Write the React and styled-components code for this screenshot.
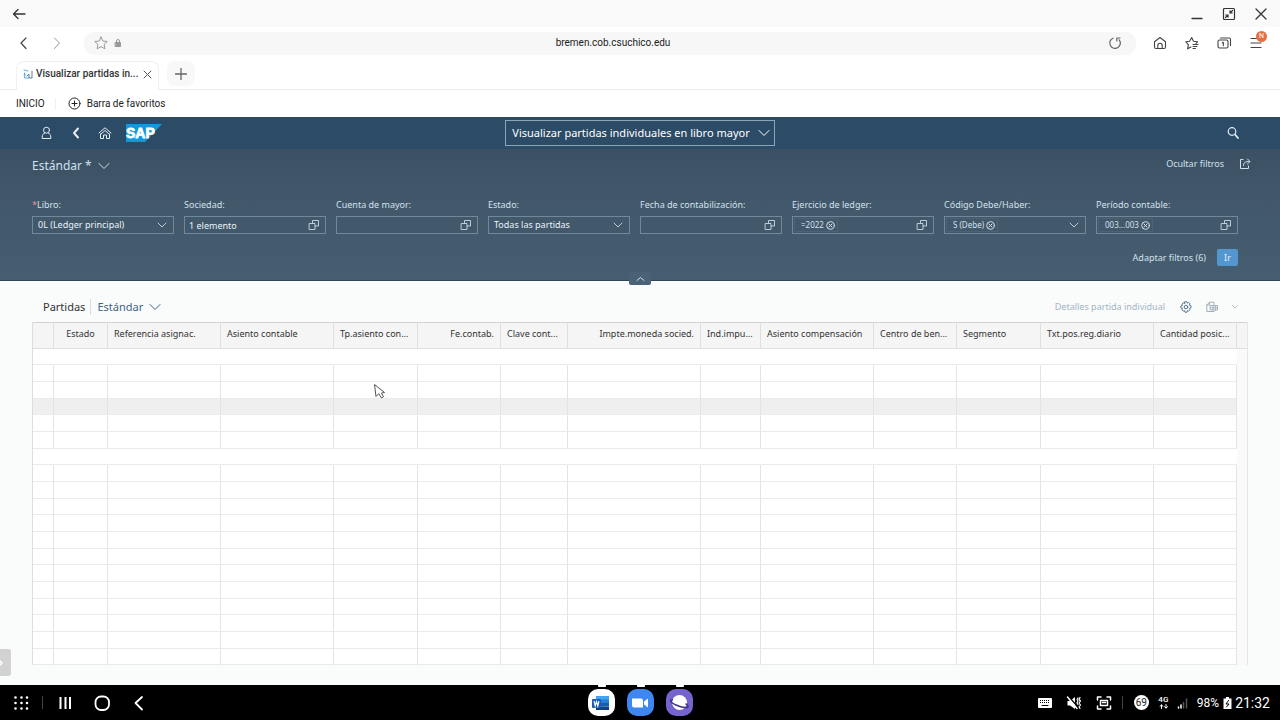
import React from "react";
import styled, { createGlobalStyle, css } from "styled-components";

const Global = createGlobalStyle`
  *, *::before, *::after { box-sizing: border-box; }
  body { margin: 0; background: #fafbfb; }
  button, input, select { font: inherit; color: inherit; margin: 0; padding: 0; border: 0; background: none; border-radius: 0; }
  a { color: inherit; text-decoration: none; }
`;

const Page = styled.div`
  min-height: 100vh;
  display: flex;
  flex-direction: column;
  font-family: Roboto, "Liberation Sans", sans-serif;
  font-size: 10px;
  line-height: 14px;
  color: #333;
`;

const Svg = styled.svg`
  display: block;
  flex: none;
  fill: none;
  stroke: currentColor;
  stroke-width: ${(p) => p.$w || 1};
  stroke-linecap: round;
  stroke-linejoin: round;
`;

const Icon = ({ w = 16, h = 16, sw, children }) => (
  <Svg width={w} height={h} viewBox={`0 0 ${w} ${h}`} $w={sw} aria-hidden="true">
    {children}
  </Svg>
);

const IconButton = styled.button`
  display: flex;
  align-items: center;
  justify-content: center;
  width: ${(p) => p.$w || 16}px;
  height: 16px;
  flex: none;
  color: ${(p) => p.$c || "inherit"};
`;

/* ---------- browser ---------- */

const TitleBar = styled.div`
  height: 27px;
  padding: 0 11px;
  display: flex;
  align-items: center;
  justify-content: space-between;
  background: #fafafa;
  color: #333;
`;
const Group = styled.div`
  display: flex;
  align-items: center;
  gap: ${(p) => p.$gap || 0}px;
`;
const AddressRow = styled.div`
  height: 32px;
  padding: 0 16px;
  display: flex;
  align-items: center;
  gap: 16px;
  background: #fff;
  color: #444;
`;
const AddressBar = styled.div`
  flex: 1;
  height: 23px;
  margin-left: 4px;
  padding: 0 13px 0 9px;
  display: flex;
  align-items: center;
  border-radius: 10px;
  background: #f7f7f7;
`;
const Url = styled.input`
  flex: 1;
  min-width: 0;
  padding-right: 8px;
  text-align: center;
  color: #222;
  outline: 0;
`;
const MenuButton = styled(IconButton)`
  position: relative;
`;
const Badge = styled.span`
  position: absolute;
  top: -4px;
  right: -3px;
  width: 11px;
  height: 11px;
  border-radius: 50%;
  background: #e57043;
  color: #fff;
  font-size: 7px;
  line-height: 11px;
  text-align: center;
`;
const TabRow = styled.div`
  height: 31px;
  padding: 2px 16px 0;
  display: flex;
  gap: 8px;
  background: #fff;
  border-bottom: 1px solid #ececec;
`;
const Tab = styled.div`
  width: 143px;
  height: 29px;
  padding: 0 3px 4px 6px;
  display: flex;
  align-items: center;
  gap: 3px;
  border: 1px solid #f0f0f0;
  border-bottom: 0;
  border-radius: 8px 8px 0 0;
  background: #fff;
`;
const TabTitle = styled.span`
  flex: 1;
  min-width: 0;
  font-weight: 500;
  white-space: nowrap;
  color: #333;
`;
const NewTab = styled.button`
  width: 28px;
  height: 25px;
  display: flex;
  align-items: center;
  justify-content: center;
  border-radius: 8px;
  background: #f8f8f8;
  color: #666;
`;
const Favorites = styled.nav`
  height: 27px;
  padding: 0 16px;
  display: flex;
  align-items: center;
  background: #fff;
  color: #222;
`;
const FavDivider = styled.span`
  width: 1px;
  height: 12px;
  margin: 0 12px 0 10px;
  background: #f0f0f0;
`;
const FavButton = styled.button`
  display: flex;
  align-items: center;
  gap: 6px;
`;

/* ---------- shell ---------- */

const uiFont = css`
  font-family: "Noto Sans", Roboto, sans-serif;
  font-size: 9px;
`;

const Shell = styled.header`
  height: 32px;
  padding: 0 39px;
  display: grid;
  grid-template-columns: 1fr auto 1fr;
  align-items: center;
  background: #2c4b66;
  color: #e4eef6;
`;
const ShellEnd = styled.div`
  display: flex;
  justify-content: flex-end;
`;
const ShellTitle = styled.button`
  height: 26px;
  padding: 0 4px 0 6px;
  display: flex;
  align-items: center;
  gap: 8px;
  border: 1px solid #8ba4b8;
  font-size: 11px;
  color: #fff;
  white-space: nowrap;
`;
const SapLogo = styled.svg`
  display: block;
`;
const Filters = styled.section`
  position: relative;
  height: 132px;
  padding: 0 42px 0 32px;
  background: linear-gradient(#3b5163, #43596c 50%, #455e70);
  border-bottom: 1px solid #30475a;
  color: #d3e1ec;
`;
const FilterHead = styled.div`
  height: 34px;
  display: flex;
  align-items: center;
  justify-content: space-between;
`;
const Variant = styled.button`
  display: flex;
  align-items: center;
  gap: 6px;
  font-size: ${(p) => p.$size || 11}px;
  color: ${(p) => p.$c || "#cfe0ee"};
`;
const HeadActions = styled.div`
  height: 30px;
  display: flex;
  align-items: center;
  align-self: flex-start;
  gap: 13px;
  margin-right: -15px;
`;
const FilterGrid = styled.div`
  margin-top: 15px;
  display: grid;
  grid-template-columns: repeat(8, minmax(0, 1fr));
  gap: 10px;
`;
const Field = styled.div`
  display: flex;
  flex-direction: column;
  gap: 4px;
`;
const Label = styled.label`
  white-space: nowrap;
`;
const Required = styled.span`
  color: #f08a9b;
`;
const Box = styled.div`
  height: 18px;
  padding-right: 4px;
  display: flex;
  align-items: center;
  border: 1px solid #71889a;
  background: #42586b;
  color: #eaf3fa;
`;
const Input = styled.input`
  flex: 1;
  min-width: 0;
  height: 16px;
  padding-left: 4px;
  outline: 0;
`;
const SelectWrap = styled(Box)`
  position: relative;
  padding-right: 0;
`;
const Select = styled.select`
  width: 100%;
  height: 16px;
  padding-left: 5px;
  appearance: none;
  outline: 0;
`;
const SelectArrow = styled.span`
  position: absolute;
  right: 4px;
  top: 0;
  width: 14px;
  height: 16px;
  display: flex;
  align-items: center;
  justify-content: center;
  pointer-events: none;
  color: #bccddb;
`;
const Token = styled.span`
  height: 14px;
  margin-left: 1px;
  padding: 0 2px 0 6px;
  display: flex;
  align-items: center;
  gap: 2px;
  border: 1px solid #4c6275;
  font-size: 8px;
  white-space: nowrap;
  color: #d3e1ec;
`;
const TokenRemove = styled.button`
  display: flex;
`;
const FilterFoot = styled.div`
  margin-top: 15px;
  display: flex;
  align-items: center;
  justify-content: flex-end;
  gap: 11px;
`;
const LinkButton = styled.button`
  white-space: nowrap;
  color: ${(p) => p.$c || "inherit"};
`;
const GoButton = styled.button`
  width: 21px;
  height: 17px;
  border-radius: 2px;
  background: #5496cf;
  color: #e4f0fa;
`;
const Collapse = styled.button`
  position: absolute;
  left: 50%;
  bottom: -5px;
  width: 22px;
  height: 13px;
  margin-left: -11px;
  display: flex;
  align-items: center;
  justify-content: center;
  border-radius: 2px;
  background: #4a6276;
`;

/* ---------- table ---------- */

const Content = styled.main`
  position: relative;
  flex: 1;
  padding: 8px 32px 20px;
`;
const Toolbar = styled.div`
  height: 33px;
  padding: 2px 8px 0 11px;
  display: flex;
  align-items: center;
  justify-content: space-between;
`;
const Title = styled.h2`
  margin: 0;
  padding-right: 5px;
  border-right: 1px solid #ddd;
  font-size: 11px;
  font-weight: 400;
  line-height: 16px;
`;
const Table = styled.table`
  width: 100%;
  table-layout: fixed;
  border-collapse: separate;
  border-spacing: 0;
  border-left: 1px solid #ddd;
  border-right: 1px solid #e6e6e6;
  background: #fff;
`;
const Th = styled.th`
  height: 27px;
  padding: 0 6px 4px;
  overflow: hidden;
  border-top: 1px solid #d2d2d2;
  border-bottom: 1px solid #dedede;
  border-right: 1px solid #dfdfdf;
  background: #f5f5f5;
  font-weight: 400;
  text-align: ${(p) => p.$align || "left"};
  white-space: nowrap;
  &:last-child { border-right: 0; }
`;
const Row = styled.tr`
  height: 17px;
  background: ${(p) => (p.$hover ? "#efefef" : "#fff")};
  &:nth-child(3n + 1) { height: 16px; }
`;
const Td = styled.td`
  padding: 0;
  border-bottom: 1px solid #ebebeb;
  border-right: 1px solid ${(p) => (p.$plain ? "transparent" : "#e4e4e4")};
  &:last-child { border: 0; background: #fafafa; }
`;
const SideHandle = styled.button`
  position: absolute;
  left: 0;
  bottom: 9px;
  width: 11px;
  height: 27px;
  display: flex;
  align-items: center;
  border-radius: 0 3px 3px 0;
  background: #d2d2d2;
  color: #fff;
`;
const Pointer = styled.svg`
  position: absolute;
  left: 373px;
  top: 102px;
`;

/* ---------- task bar ---------- */

const TaskBar = styled.footer`
  height: 35px;
  padding: 0 10px;
  display: grid;
  grid-template-columns: 1fr auto 1fr;
  align-items: center;
  background: #000;
  color: #fff;
`;
const NavKeys = styled.div`
  padding-left: 3px;
  display: flex;
  align-items: center;
`;
const KeyButton = styled(IconButton)`
  height: 20px;
  margin-right: ${(p) => p.$after || 0}px;
`;
const BarDivider = styled.span`
  width: 1px;
  height: 13px;
  background: #444;
  margin: 0 ${(p) => p.$mr}px 0 ${(p) => p.$ml}px;
`;
const AppButton = styled.button`
  position: relative;
  width: 27px;
  height: 27px;
  display: flex;
  align-items: center;
  justify-content: center;
  border-radius: 10px;
  background: ${(p) => p.$bg};
  &::before {
    content: "";
    position: absolute;
    top: -5px;
    left: 10px;
    width: 8px;
    height: 3px;
    border-radius: 1px;
    background: #fff;
  }
`;
const Status = styled.div`
  display: flex;
  align-items: center;
  justify-content: flex-end;
`;
const Bubble = styled.span`
  width: 15px;
  height: 15px;
  margin-right: 9px;
  border-radius: 50%;
  background: #fff;
  color: #222;
  line-height: 15px;
  text-align: center;
`;
const Network = styled.span`
  width: 11px;
  display: flex;
  flex-direction: column;
  align-items: center;
  font-size: 8px;
  font-weight: 500;
  line-height: 8px;
`;
const Battery = styled.span`
  margin-right: 4px;
  font-size: 12px;
`;
const Clock = styled.time`
  margin-left: 3px;
  font-size: 14px;
`;

const Chevron = ({ w = 12 }) => (
  <Icon w={12} h={8}>
    {w === 12 ? <path d="M1 1.500l5 5 5-5" /> : <path d="M2 2l4 4 4-4" />}
  </Icon>
);
const ValueHelp = () => (
  <Icon w={12} h={12}>
    <path d="M1.500 4.500h5.500v6H1.500zM4.500 4.500v-3h6v5.500H7" />
  </Icon>
);

const Choice = ({ id, value }) => (
  <SelectWrap>
    <Select id={id} defaultValue={value}>
      <option>{value}</option>
    </Select>
    <SelectArrow><Chevron w={10} /></SelectArrow>
  </SelectWrap>
);

const Help = ({ id, value = "", token, arrow }) => (
  <Box>
    {token && (
      <Token>
        {token}
        <TokenRemove aria-label={`Quitar ${token}`}>
          <Icon w={9} h={9}><circle cx="4.500" cy="4.500" r="3.800" /><path d="M3 3l3 3M6 3L3 6" /></Icon>
        </TokenRemove>
      </Token>
    )}
    <Input id={id} defaultValue={value} />
    <IconButton $w={14} $c="#bccddb" aria-label="Ayuda para entradas">{arrow ? <Chevron w={10} /> : <ValueHelp />}</IconButton>
  </Box>
);

const filters = [
  { id: "libro", label: "Libro:", required: true, choice: true, value: "0L (Ledger principal)" },
  { id: "sociedad", label: "Sociedad:", value: "1 elemento" },
  { id: "cuenta", label: "Cuenta de mayor:" },
  { id: "estado", label: "Estado:", choice: true, value: "Todas las partidas" },
  { id: "fecha", label: "Fecha de contabilización:" },
  { id: "ejercicio", label: "Ejercicio de ledger:", token: "=2022" },
  { id: "codigo", label: "Código Debe/Haber:", token: "S (Debe)", arrow: true },
  { id: "periodo", label: "Período contable:", token: "003...003" },
];

const columns = [
  ["", 21],
  ["Estado", 54, "center"],
  ["Referencia asignac.", 113],
  ["Asiento contable", 113],
  ["Tp.asiento con...", 84],
  ["Fe.contab.", 83, "right"],
  ["Clave cont...", 67],
  ["Impte.moneda socied.", 133, "right"],
  ["Ind.impu...", 60],
  ["Asiento compensación", 113],
  ["Centro de ben...", 83],
  ["Segmento", 84],
  ["Txt.pos.reg.diario", 113],
  ["Cantidad posic...", 83],
  ["", 10],
];

const Ui = styled.div`
  ${uiFont}
  flex: 1;
  display: flex;
  flex-direction: column;
`;

export default function App() {
  return (
    <Page>
      <Global />
      <TitleBar>
        <IconButton aria-label="Atrás"><Icon sw={1.3}><path d="M2.500 8h11.500M7 3.500L2.500 8 7 12.500" /></Icon></IconButton>
        <Group $gap={16}>
          <IconButton aria-label="Minimizar"><Icon sw={1.3}><path d="M3 12.500h10" /></Icon></IconButton>
          <IconButton aria-label="Restaurar">
            <Icon sw={1.2}><rect x="2.500" y="2.500" width="11" height="11" rx="1" /><path d="M11.500 4.500L9 7M9 4.800V7h2.200M4.500 11.500L7 9M4.800 9H7v2.200" /></Icon>
          </IconButton>
          <IconButton aria-label="Cerrar"><Icon sw={1.3}><path d="M3 3l10 10M13 3L3 13" /></Icon></IconButton>
        </Group>
      </TitleBar>

      <AddressRow>
        <IconButton aria-label="Página anterior"><Icon sw={1.2}><path d="M10 3L5 8l5 5.500" /></Icon></IconButton>
        <IconButton aria-label="Página siguiente" $c="#999"><Icon><path d="M6.500 3l5 5-5 5.500" /></Icon></IconButton>
        <AddressBar>
          <IconButton $c="#999" aria-label="Añadir a favoritos">
            <Icon><path d="M8 2l1.900 4 4.300.5-3.100 3 .8 4.300L8 11.700l-3.900 2.100.8-4.300-3.100-3L6.100 6z" /></Icon>
          </IconButton>
          <IconButton $w={18} $c="#999" aria-label="Sitio seguro">
            <Icon w={8} h={10}><rect x="1.500" y="4.500" width="5" height="4" fill="currentColor" /><path d="M2.500 4.500V3a1.500 1.500 0 013 0v1.500" /></Icon>
          </IconButton>
          <Url aria-label="Dirección" defaultValue="bremen.cob.csuchico.edu" />
          <IconButton $c="#666" aria-label="Recargar">
            <Icon sw={1.2}><path d="M6 3.200a5.300 5.300 0 106.200 1.600M9.800 6V3H13" /></Icon>
          </IconButton>
        </AddressBar>
        <IconButton aria-label="Inicio">
          <Icon sw={1.1}><path d="M2.500 6.800L8 2.500l5.500 4.300v5.200a1.500 1.500 0 01-1.500 1.500H4A1.500 1.500 0 012.500 12zM5.800 13.300V10.500a2.200 2.200 0 014.400 0v2.800" /></Icon>
        </IconButton>
        <IconButton aria-label="Favoritos">
          <Icon sw={1.1}><path d="M7 12l-3.400 1.800.8-4L1.800 6.700l3.800-.4L7.700 2.500l1.800 3.800 4 .5-1.500 1.500M9 9.500h5M9 11.500h4M9 13.500h2.500" /></Icon>
        </IconButton>
        <IconButton aria-label="Pestañas">
          <Icon sw={1.1}><rect x="2" y="5" width="10" height="8" rx="1.500" /><path d="M4.500 3h8.500a1.500 1.500 0 011.500 1.500v6M6.300 8l1-.7v3.400" /></Icon>
        </IconButton>
        <MenuButton aria-label="Menú"><Icon sw={1.2}><path d="M3 3.500h10M3 8h10M3 12.500h10" /></Icon><Badge>N</Badge></MenuButton>
      </AddressRow>

      <TabRow>
        <Tab>
          <Icon w={10} h={10}><path d="M1 1l4 1M1.500 4v5h4" stroke="#5ab0de" /><path d="M9 2v7H6V5L4 7" stroke="#5c7fa5" /><path d="M1 6h2" stroke="#6bbbe4" /></Icon>
          <TabTitle>Visualizar partidas in...</TabTitle>
          <IconButton aria-label="Cerrar pestaña" $c="#555"><Icon w={9} h={9}><path d="M1 1l7 7M8 1L1 8" /></Icon></IconButton>
        </Tab>
        <NewTab aria-label="Nueva pestaña"><Icon w={12} h={12} sw={1.3}><path d="M6 .5v11M.5 6h11" /></Icon></NewTab>
      </TabRow>

      <Favorites>
        <a href="#inicio">INICIO</a>
        <FavDivider />
        <FavButton><Icon w={13} h={13}><circle cx="6.500" cy="6.500" r="5.500" /><path d="M6.500 4v5M4 6.500h5" /></Icon>Barra de favoritos</FavButton>
      </Favorites>

      <Ui>
        <Shell>
          <Group $gap={13}>
            <IconButton aria-label="Usuario">
              <Icon><circle cx="7.500" cy="5.200" r="3" /><path d="M5.800 8C4 8.700 3.200 10 3.200 12v1.500h8.600V12c0-2-.8-3.300-2.600-4" /></Icon>
            </IconButton>
            <IconButton aria-label="Volver"><Icon sw={2}><path d="M10 3.500L6 8l4 4.500" /></Icon></IconButton>
            <IconButton aria-label="Página de inicio">
              <Icon><path d="M2 8l6-5.200L14 8M4 9l4-3.500L12 9M3.500 9v4.500h3V10h3v3.500h3V9" /></Icon>
            </IconButton>
            <SapLogo width="36" height="18" viewBox="0 0 36 18" role="img" aria-label="SAP">
              <path d="M0 0h36L19 18H0z" fill="#1698d6" />
              <text x="0" y="14" fill="#fff" fontFamily="Liberation Sans, sans-serif" fontWeight="700" fontSize="14" stroke="#fff" strokeWidth=".8">SAP</text>
            </SapLogo>
          </Group>
          <ShellTitle>Visualizar partidas individuales en libro mayor<Chevron /></ShellTitle>
          <ShellEnd>
            <IconButton aria-label="Buscar"><Icon sw={1.200}><circle cx="7" cy="6.500" r="3.800" /><path d="M10 9.500l3 3.500" strokeWidth="1.800" /></Icon></IconButton>
          </ShellEnd>
        </Shell>

        <Filters>
          <FilterHead>
            <Variant $size={12}>Estándar *<Chevron /></Variant>
            <HeadActions>
              <LinkButton>Ocultar filtros</LinkButton>
              <IconButton aria-label="Compartir">
                <Icon w={12} h={12}><path d="M4 1.500H1.500v9h8V8M4.500 7.500C4.500 4.500 6 3.500 10.500 3.500M8.500 1l2.500 2.500L8.500 6" /></Icon>
              </IconButton>
            </HeadActions>
          </FilterHead>
          <FilterGrid>
            {filters.map((f) => (
              <Field key={f.id}>
                <Label htmlFor={f.id}>{f.required && <Required>*</Required>}{f.label}</Label>
                {f.choice ? <Choice {...f} /> : <Help {...f} />}
              </Field>
            ))}
          </FilterGrid>
          <FilterFoot>
            <LinkButton>Adaptar filtros (6)</LinkButton>
            <GoButton>Ir</GoButton>
          </FilterFoot>
          <Collapse aria-label="Contraer cabecera"><Icon w={9} h={6}><path d="M1 4.500l3.500-3 3.500 3" /></Icon></Collapse>
        </Filters>

        <Content>
          <Toolbar>
            <Group $gap={6}>
              <Title>Partidas</Title>
              <Variant $c="#3f6583">Estándar<Chevron /></Variant>
            </Group>
            <Group $gap={13}>
              <LinkButton $c="#a3b6c5" disabled>Detalles partida individual</LinkButton>
              <Group $gap={10}>
                <IconButton $c="#557891" aria-label="Opciones">
                  <Icon w={12} h={12}><circle cx="6" cy="6" r="1.800" /><path d="M5 .8h2l.4 1.300 1.300-.6 1.300 1.400-.6 1.200 1.600.8v2l-1.500.5.5 1.300-1.400 1.400-1.200-.6L7 11.200H5l-.5-1.600-1.300.5-1.300-1.400.6-1.300L.9 7V5l1.500-.6-.5-1.200 1.300-1.400 1.300.6z" /></Icon>
                </IconButton>
                <IconButton $c="#a5b1bb" aria-label="Exportar">
                  <Icon w={12} h={12}><path d="M4 10.500H.8V4L3.500 1.200H8V3.500M3.500 1.200V4H.8M4.500 4.500h7v4.500h-7zM4.500 6.800h7M7 4.500V9M9.300 4.500V9M4 10.500h4" /></Icon>
                </IconButton>
                <IconButton $w={10} $c="#b9c3cb" aria-label="Más opciones de exportación"><Icon w={8} h={6}><path d="M1.500 1.500L4 4l2.500-2.500" /></Icon></IconButton>
              </Group>
            </Group>
          </Toolbar>
          <Table>
            <colgroup>{columns.map(([, w], i) => <col key={i} width={w} />)}</colgroup>
            <thead>
              <tr>{columns.map(([name, , align], i) => <Th key={i} $align={align} scope="col">{name}</Th>)}</tr>
            </thead>
            <tbody>
              {Array.from({ length: 19 }, (_, r) => (
                <Row key={r} $hover={r === 3}>
                  {columns.map((_, c) => <Td key={c} $plain={r === 0 || r === 6} />)}
                </Row>
              ))}
            </tbody>
          </Table>
          <SideHandle aria-label="Abrir panel"><Icon w={5} h={10} sw={1.500}><path d="M0 3l2 2-2 2" /></Icon></SideHandle>
          <Pointer width="13" height="17" viewBox="0 0 13 17" aria-hidden="true">
            <path d="M1.500 1.500l1.500 12 2.800-2.800 2.700 4.300 2-1.200-2-3.800 3-.5z" fill="#fff" stroke="#555" strokeLinejoin="round" />
          </Pointer>
        </Content>
      </Ui>

      <TaskBar>
        <NavKeys>
          <KeyButton aria-label="Aplicaciones">
            <Icon sw={2.600}><path d="M2.500 2.500h.01M8.500 2.500h.01M14 2.500h.01M2.500 8h.01M8.500 8h.01M14 8h.01M2.500 13.500h.01M8.500 13.500h.01M14 13.500h.01" /></Icon>
          </KeyButton>
          <BarDivider $ml={13} $mr={14} />
          <KeyButton $after={21} aria-label="Recientes"><Icon sw={2}><path d="M3.500 2v12M8.500 2v12M13 2v12" strokeLinecap="butt" /></Icon></KeyButton>
          <KeyButton $after={21} aria-label="Inicio"><Icon sw={1.800}><rect x="1.500" y="1.500" width="13.500" height="13.500" rx="5.500" /></Icon></KeyButton>
          <KeyButton aria-label="Atrás"><Icon sw={1.800}><path d="M11 2L4.500 8l6.500 6.500" /></Icon></KeyButton>
        </NavKeys>
        <Group $gap={12}>
          <AppButton $bg="#fff" aria-label="Word">
            <svg width="18" height="16" viewBox="0 0 18 16" aria-hidden="true">
              <path d="M4 1h13v4H4z" fill="#41a5ee" /><path d="M4 4.500h13V8H4z" fill="#2b7cd3" /><path d="M4 8h13v3.500H4z" fill="#185abd" /><path d="M4 11.500h13V15H4z" fill="#103f91" />
              <rect x="0" y="4" width="9" height="9" rx="1" fill="#185abd" />
              <path d="M2 6l1.200 5L4.500 6.500 5.800 11 7 6" fill="none" stroke="#fff" strokeWidth="1.100" />
            </svg>
          </AppButton>
          <AppButton $bg="#3f87f0" aria-label="Zoom">
            <svg width="17" height="10" viewBox="0 0 17 10" aria-hidden="true"><path d="M0 .5h9a2 2 0 012 2v7H2a2 2 0 01-2-2zM12 3.500l4-3v9l-4-3z" fill="#fff" /></svg>
          </AppButton>
          <AppButton $bg="#7563cf" aria-label="Internet">
            <svg width="19" height="18" viewBox="0 0 19 18" aria-hidden="true">
              <circle cx="9.500" cy="8.500" r="7.500" fill="#fff" />
              <path d="M3 6C-.5 5.500-.5 8 6 11s13 3.500 12 1c-.3-.9-1.300-1.600-2.500-2.300" fill="none" stroke="#3c3384" strokeWidth="1.500" />
            </svg>
          </AppButton>
        </Group>
        <Status>
          <KeyButton $after={13} aria-label="Teclado">
            <Icon><rect x="1" y="3" width="14" height="10" rx="1" fill="currentColor" stroke="none" /><path d="M3 5.500h10M3 7.500h10" stroke="#000" strokeDasharray="1 1" strokeLinecap="butt" /><path d="M5 10.500h6" stroke="#000" /></Icon>
          </KeyButton>
          <KeyButton $after={14} aria-label="Silencio">
            <Icon><path d="M1.500 6H4l5-4v12L4 10.500H1.500z" fill="currentColor" stroke="none" /><path d="M2.500 1.500l8 9" stroke="#000" strokeWidth="1.500" /><path d="M1.500 2l9.500 11.500" strokeWidth="1.500" /><path d="M12 3l-1 1.500 1 1.500-1 2 1 1.500M14 2.500l-1 2 1.500 1.500-1.500 2 1.500 2-1.500 2 1 1.500" strokeWidth="1.200" /></Icon>
          </KeyButton>
          <KeyButton aria-label="Captura de pantalla">
            <Icon sw={1.500}><path d="M1.500 5V2H5M11 2h3.500v3M14.500 11v3H11M5 14H1.500v-3" /><rect x="4.500" y="5.500" width="7" height="5" /><path d="M6.500 7.500h3" /></Icon>
          </KeyButton>
          <BarDivider $ml={10} $mr={11} />
          <Bubble>69</Bubble>
          <Network>4G<Icon w={9} h={5}><path d="M2.500 4.500V1M1 2.300L2.500 1 4 2.300M7 .5V4M5.500 2.700L7 4l1.500-1.300" /></Icon></Network>
          <KeyButton as="span" $w={28}><Icon w={11} h={12} sw={1.500}><path d="M1.500 11v-1M4 11V8" /><path d="M6.500 11V5.500M9.500 11V2" stroke="#555" /></Icon></KeyButton>
          <Battery>98%</Battery>
          <Icon w={9} h={12}><path d="M3 0h3v1.500h2.500V12h-8V1.500H3z" fill="currentColor" stroke="none" /><path d="M5.500 3.500L3 7h3l-2.500 3" stroke="#000" /></Icon>
          <Clock>21:32</Clock>
        </Status>
      </TaskBar>
    </Page>
  );
}
